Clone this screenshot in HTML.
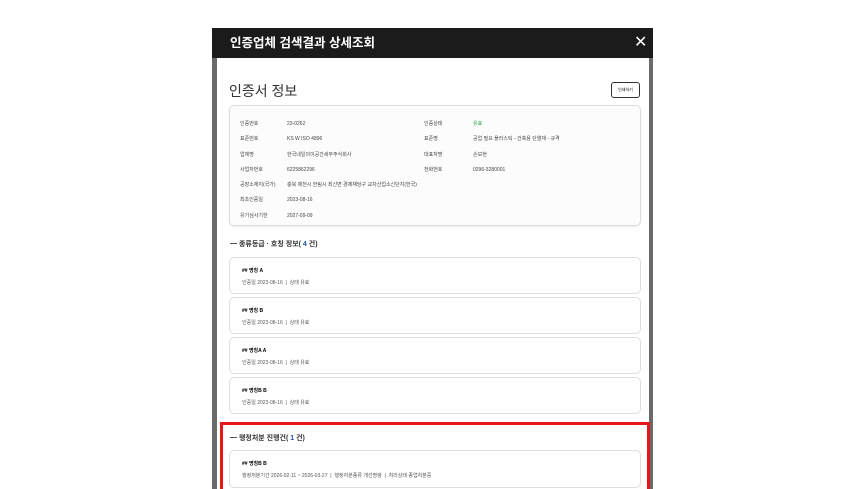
<html style="overflow:hidden;height:489px"><head><style>
body{margin:0;width:865px;height:489px;background:#fff;position:relative;overflow:hidden;font-family:"Liberation Sans","Noto Sans CJK KR",sans-serif}
.a{position:absolute}
.frame{left:212px;top:28px;width:441px;height:461px;background:#6a6a6a}
.modal{left:217px;top:28px;width:432px;height:461px;background:#fff}
.hd{left:212px;top:28px;width:441px;height:30px;background:#1b1b1b;color:#fff;font-weight:bold;font-size:12.5px;line-height:30px}
.box{border:1px solid #ddd;border-radius:5px;background:#fcfcfc;box-shadow:0 1px 2px rgba(0,0,0,.08)}
.s{font-size:5px;color:#444}
.card{left:229px;width:410px;height:35px;border:1px solid #ddd;border-radius:5px;background:#fff}
.card b{position:absolute;left:12px;top:9px;font-size:5px}
.card span{position:absolute;left:12px;top:21px;font-size:5px;color:#555}
.sec{left:230px;font-size:7px;font-weight:bold;color:#333}
</style></head><body>
<div class="a frame"></div><div class="a modal"></div>
<div class="a hd"><span style="position:absolute;left:18px">인증업체 검색결과 상세조회</span><span style="position:absolute;left:422px;font-weight:normal;font-size:16px">✕</span></div>
<div class="a" style="left:229px;top:81px;font-size:14px;color:#333">인증서 정보</div>
<div class="a" style="left:611px;top:82px;width:27px;height:14px;border:1px solid #333;border-radius:3px;font-size:4px;text-align:center;line-height:14px">인쇄하기</div>
<div class="a box" style="left:229px;top:105px;width:410px;height:119px"></div>
<div class="a s" style="left:240px;top:117px;line-height:15.3px">인증번호<br>표준번호<br>업체명<br>사업자번호<br>공장소재지(국가)<br>최초인증일<br>유기심사기한</div>
<div class="a s" style="left:287px;top:117px;line-height:15.3px">23-0262<br>KS W ISO 4896<br>한국내일의이공간세무주식회사<br>6225862296<br>충북 제천시 한림시 최신면 경제채당구 교차산업소신단지(한국)<br>2023-08-16<br>2027-09-09</div>
<div class="a s" style="left:424px;top:117px;line-height:15.3px">인증상태<br>표준명<br>대표자명<br>전화번호</div>
<div class="a s" style="left:473px;top:117px;line-height:15.3px"><span style="color:#1a9a3a">유효</span><br>공업 필요 플라스틱 - 건축용 단열재 - 규격<br>손보현<br>0296-3280001</div>
<div class="a sec" style="top:239px">━ 종류등급 · 호칭 정보( <span style="color:#1e4fb0">4</span> 건)</div>
<div class="a card" style="top:257px"><b>## 명칭 A</b><span>인증일 2023-08-16 &nbsp;|&nbsp; 상태 유효</span></div>
<div class="a card" style="top:297px"><b>## 명칭 B</b><span>인증일 2023-08-16 &nbsp;|&nbsp; 상태 유효</span></div>
<div class="a card" style="top:337px"><b>## 명칭A A</b><span>인증일 2023-08-16 &nbsp;|&nbsp; 상태 유효</span></div>
<div class="a card" style="top:377px"><b>## 명칭B B</b><span>인증일 2023-08-16 &nbsp;|&nbsp; 상태 유효</span></div>
<div class="a" style="left:220px;top:422px;width:424px;height:70px;border:3px solid #e8161b;border-bottom:none"></div>
<div class="a sec" style="top:433px">━ 행정처분 진행건( <span style="color:#1e4fb0">1</span> 건)</div>
<div class="a card" style="top:450px;height:36px"><b>## 명칭B B</b><span>행정처분기간 2026-02-11 ~ 2026-03-27 &nbsp;|&nbsp; 행정처분종류 개선명령 &nbsp;|&nbsp; 처리상태 종업처분중</span></div>
</body></html>
